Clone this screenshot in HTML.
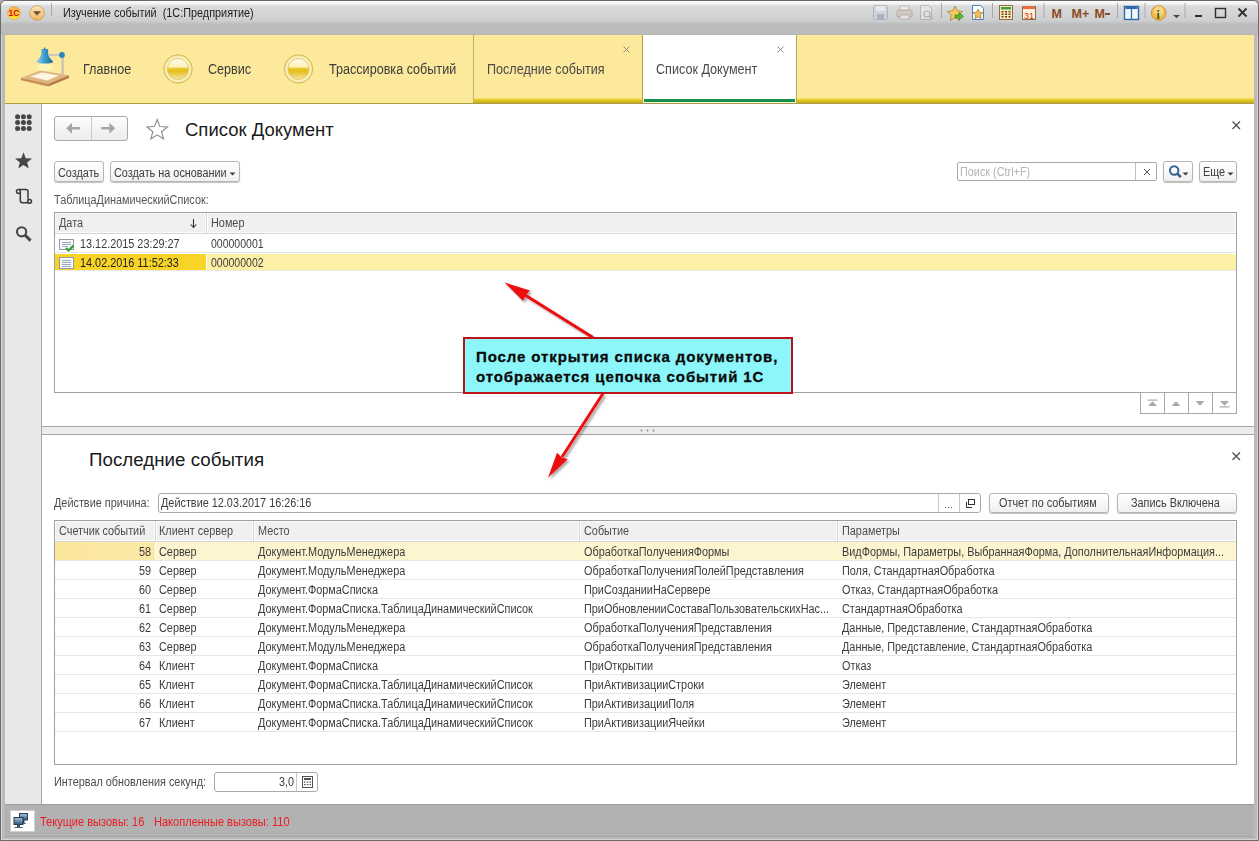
<!DOCTYPE html>
<html><head><meta charset="utf-8">
<style>
*{box-sizing:border-box;margin:0;padding:0}
html,body{width:1259px;height:841px;overflow:hidden;background:#a8a8a8}
body{position:relative;font-family:"Liberation Sans",sans-serif;font-size:11px;color:#4d4d4d}
.a{position:absolute}
.t{position:absolute;white-space:nowrap;line-height:1}
.s{font-size:12px;transform:scaleX(.905);transform-origin:0 0}
.sr{transform-origin:100% 0}
.tab{font-size:14px;transform:scaleX(.9);transform-origin:0 0}
#frame{left:0;top:0;width:1259px;height:841px;background:#bababa;border:1px solid #6a6a6a;border-radius:6px 6px 0 0;box-shadow:inset 1px 1px 0 #d8d8d8,inset -1px -1px 0 #d4d4d4}
#title{left:1px;top:1px;width:1257px;height:34px;border-radius:5px 5px 0 0;background:linear-gradient(#fbfbfb 0px,#f2f2f2 3px,#dadbdd 5px,#cdced0 20px,#bcbdbf 23px,#bbbcbe 32px,#b8b4a6 34px)}
#secbar{left:5px;top:35px;width:1249px;height:68px;background:#fce99c}
#sidebar{left:5px;top:104px;width:37px;height:700px;background:#e8e8e8;border-right:1px solid #a8a8a8}
#main{left:42px;top:104px;width:1212px;height:700px;background:#fff}
#status{left:5px;top:804px;width:1249px;height:33px;background:#b2b2b2;border-top:1px solid #9c9c9c;border-bottom:1px solid #a4a4a4}
.sep{position:absolute;width:1px;background:#a8a8a8;box-shadow:1px 0 0 #e6e6e6}
.btn{position:absolute;border:1px solid #b5b5b5;border-radius:3px;background:linear-gradient(#fff,#f0f0f0);box-shadow:0 1px 1px rgba(0,0,0,.25);color:#404040}
.inp{position:absolute;border:1px solid #a9a9a9;border-radius:3px;background:#fff}
.tbl{position:absolute;border:1px solid #a0a0a0;background:#fff}
.hdr{position:absolute;background:#f0f0f0;border-bottom:1px solid #d6d6d6}
.row{position:absolute;left:0;height:19px;border-bottom:1px solid #e4e4e4}
.cell{position:absolute;white-space:nowrap;line-height:1;top:5px;color:#333}
.hc{position:absolute;width:1px;background:#d8d8d8}
</style></head><body>
<div id="frame" class="a"></div>
<div id="title" class="a"></div>
<div class="t s" style="left:63px;top:7px;color:#1e1e1e">Изучение событий&nbsp;&nbsp;(1С:Предприятие)</div>
<div id="secbar" class="a"></div>
<div id="sidebar" class="a"></div>
<div id="main" class="a"></div>
<div id="status" class="a"></div>

<!-- section bar -->
<div class="a" style="left:5px;top:102px;width:1249px;height:1px;background:#fbf080"></div><div class="a" style="left:5px;top:103px;width:1249px;height:1px;background:#aa9c50"></div>
<div class="a" style="left:473px;top:35px;width:1px;height:68px;background:#c0b060"></div>
<div class="a" style="left:474px;top:98px;width:780px;height:5px;background:linear-gradient(#fcee70 0px,#ecd840 1px,#dcc020 3px,#c8aa14 5px)"></div>
<div class="a" style="left:642px;top:35px;width:1px;height:68px;background:#b0a050"></div>
<div class="a" style="left:643px;top:35px;width:154px;height:68px;background:linear-gradient(#fff 0,#fff 62px,#f8fcd0 68px);border-right:1px solid #b8a858"></div>
<div class="a" style="left:644px;top:99px;width:151px;height:3px;background:#13904a"></div>
<div class="t tab" style="left:83px;top:62px;color:#3c3c3c">Главное</div>
<div class="t tab" style="left:208px;top:62px;color:#3c3c3c">Сервис</div>
<div class="t tab" style="left:329px;top:62px;color:#3c3c3c">Трассировка событий</div>
<div class="t tab" style="left:487px;top:62px;color:#4a4a4a">Последние события</div>
<div class="t tab" style="left:656px;top:62px;color:#4a4a4a">Список Документ</div>

<!-- upper form -->
<div class="t" style="left:185px;top:121px;font-size:18.5px;color:#1a1a1a">Список Документ</div>
<div class="btn" style="left:54px;top:116px;width:74px;height:25px;border-color:#a9a9a9;box-shadow:none;background:linear-gradient(#fdfdfd,#ececec)"></div>
<div class="a" style="left:91px;top:117px;width:1px;height:23px;background:#c8c8c8"></div>
<div class="btn" style="left:54px;top:161px;width:50px;height:21px"></div>
<div class="t s" style="left:58px;top:167px;color:#404040">Создать</div>
<div class="btn" style="left:110px;top:161px;width:130px;height:21px"></div>
<div class="t s" style="left:114px;top:167px;color:#404040">Создать на основании</div>
<div class="inp" style="left:957px;top:162px;width:200px;height:19px;border-radius:2px"></div>
<div class="a" style="left:1135px;top:163px;width:1px;height:17px;background:#c0c0c0"></div>
<div class="t s" style="left:960px;top:166px;color:#b4b4b4">Поиск (Ctrl+F)</div>
<div class="btn" style="left:1163px;top:161px;width:30px;height:21px"></div>
<div class="btn" style="left:1199px;top:161px;width:38px;height:21px"></div>
<div class="t s" style="left:1203px;top:166px;color:#404040">Еще</div>
<div class="t s" style="left:54px;top:194px;color:#555">ТаблицаДинамическийСписок:</div>

<div class="tbl" style="left:54px;top:212px;width:1183px;height:181px"></div>
<div class="hdr" style="left:55px;top:213px;width:1181px;height:21px"></div>
<div class="a" style="left:55px;top:213px;width:151px;height:20px;border:1px solid #fbfbfb"></div>
<div class="a" style="left:207px;top:213px;width:1029px;height:20px;border:1px solid #fbfbfb"></div>

<div class="a" style="left:206px;top:213px;width:1px;height:20px;background:#d4d4d4;box-shadow:1px 0 0 #fff"></div>
<div class="t s" style="left:59px;top:217px;color:#4d4d4d">Дата</div>
<div class="t s" style="left:211px;top:217px;color:#4d4d4d">Номер</div>
<div class="a" style="left:55px;top:252px;width:1181px;height:1px;background:#e6e6e6"></div>
<div class="a" style="left:55px;top:254px;width:151px;height:16px;background:#f8d426"></div>
<div class="a" style="left:207px;top:254px;width:1029px;height:16px;background:#fcefa6"></div>
<div class="a" style="left:55px;top:270px;width:1181px;height:1px;background:#e9e9e9"></div>
<div class="t s" style="left:80px;top:238px;color:#3c3c3c">13.12.2015 23:29:27</div>
<div class="t s" style="left:80px;top:257px;color:#222">14.02.2016 11:52:33</div>
<div class="t s" style="left:211px;top:238px;color:#3c3c3c;transform:scaleX(.875)">000000001</div>
<div class="t s" style="left:211px;top:257px;color:#3c3c3c;transform:scaleX(.875)">000000002</div>
<div class="a" style="left:1140px;top:392px;width:97px;height:22px;border:1px solid #a8a8a8;background:#fff"></div>
<div class="a" style="left:1164px;top:393px;width:1px;height:20px;background:#a8a8a8"></div>
<div class="a" style="left:1188px;top:393px;width:1px;height:20px;background:#a8a8a8"></div>
<div class="a" style="left:1212px;top:393px;width:1px;height:20px;background:#a8a8a8"></div>

<!-- splitter -->
<div class="a" style="left:42px;top:426px;width:1212px;height:9px;background:#ececec;border-top:1px solid #a6a6a6;border-bottom:1px solid #a6a6a6"></div>

<!-- lower form -->
<div class="t" style="left:89px;top:451px;font-size:18.75px;color:#1a1a1a">Последние события</div>
<div class="t s" style="left:54px;top:497px;color:#4d4d4d">Действие причина:</div>
<div class="inp" style="left:158px;top:493px;width:823px;height:20px"></div>
<div class="a" style="left:938px;top:494px;width:1px;height:18px;background:#c8c8c8"></div>
<div class="a" style="left:959px;top:494px;width:1px;height:18px;background:#c8c8c8"></div>
<div class="t s" style="left:161px;top:497px;color:#3c3c3c">Действие 12.03.2017 16:26:16</div>
<div class="btn" style="left:989px;top:493px;width:120px;height:20px"></div>
<div class="t s" style="left:999px;top:497px;color:#404040">Отчет по событиям</div>
<div class="btn" style="left:1117px;top:493px;width:120px;height:20px"></div>
<div class="t s" style="left:1131px;top:497px;color:#404040">Запись Включена</div>

<div class="tbl" style="left:54px;top:520px;width:1183px;height:245px"></div>
<div class="hdr" style="left:55px;top:521px;width:1181px;height:21px"></div>
<div class="a" style="left:55px;top:521px;width:100px;height:20px;border:1px solid #fbfbfb"></div>
<div class="a" style="left:156px;top:521px;width:97px;height:20px;border:1px solid #fbfbfb"></div>
<div class="a" style="left:254px;top:521px;width:325px;height:20px;border:1px solid #fbfbfb"></div>
<div class="a" style="left:580px;top:521px;width:257px;height:20px;border:1px solid #fbfbfb"></div>
<div class="a" style="left:838px;top:521px;width:398px;height:20px;border:1px solid #fbfbfb"></div>

<div class="a" style="left:155px;top:521px;width:1px;height:20px;background:#d4d4d4;box-shadow:1px 0 0 #fff"></div>
<div class="a" style="left:253px;top:521px;width:1px;height:20px;background:#d4d4d4;box-shadow:1px 0 0 #fff"></div>
<div class="a" style="left:579px;top:521px;width:1px;height:20px;background:#d4d4d4;box-shadow:1px 0 0 #fff"></div>
<div class="a" style="left:837px;top:521px;width:1px;height:20px;background:#d4d4d4;box-shadow:1px 0 0 #fff"></div>
<div class="t s" style="left:59px;top:525px;color:#4d4d4d">Счетчик событий</div>
<div class="t s" style="left:159px;top:525px;color:#4d4d4d">Клиент сервер</div>
<div class="t s" style="left:258px;top:525px;color:#4d4d4d">Место</div>
<div class="t s" style="left:584px;top:525px;color:#4d4d4d">Событие</div>
<div class="t s" style="left:842px;top:525px;color:#4d4d4d">Параметры</div>
<div class="a" style="left:55px;top:542px;width:100px;height:18px;background:linear-gradient(90deg,#fbe69c,#fbe9a8)"></div>
<div class="a" style="left:156px;top:542px;width:1080px;height:18px;background:#fdf5d0"></div>
<div class="a" style="left:55px;top:560px;width:1181px;height:1px;background:#e6e6e6"></div>
<div class="t s sr" style="left:54px;width:97px;text-align:right;top:546px;color:#3c3c3c">58</div>
<div class="t s" style="left:159px;top:546px;color:#3c3c3c">Сервер</div>
<div class="t s" style="left:258px;top:546px;color:#3c3c3c">Документ.МодульМенеджера</div>
<div class="t s" style="left:584px;top:546px;color:#3c3c3c">ОбработкаПолученияФормы</div>
<div class="t s" style="left:842px;top:546px;color:#3c3c3c">ВидФормы, Параметры, ВыбраннаяФорма, ДополнительнаяИнформация...</div>
<div class="a" style="left:55px;top:579px;width:1181px;height:1px;background:#e6e6e6"></div>
<div class="t s sr" style="left:54px;width:97px;text-align:right;top:565px;color:#3c3c3c">59</div>
<div class="t s" style="left:159px;top:565px;color:#3c3c3c">Сервер</div>
<div class="t s" style="left:258px;top:565px;color:#3c3c3c">Документ.МодульМенеджера</div>
<div class="t s" style="left:584px;top:565px;color:#3c3c3c">ОбработкаПолученияПолейПредставления</div>
<div class="t s" style="left:842px;top:565px;color:#3c3c3c">Поля, СтандартнаяОбработка</div>
<div class="a" style="left:55px;top:598px;width:1181px;height:1px;background:#e6e6e6"></div>
<div class="t s sr" style="left:54px;width:97px;text-align:right;top:584px;color:#3c3c3c">60</div>
<div class="t s" style="left:159px;top:584px;color:#3c3c3c">Сервер</div>
<div class="t s" style="left:258px;top:584px;color:#3c3c3c">Документ.ФормаСписка</div>
<div class="t s" style="left:584px;top:584px;color:#3c3c3c">ПриСозданииНаСервере</div>
<div class="t s" style="left:842px;top:584px;color:#3c3c3c">Отказ, СтандартнаяОбработка</div>
<div class="a" style="left:55px;top:617px;width:1181px;height:1px;background:#e6e6e6"></div>
<div class="t s sr" style="left:54px;width:97px;text-align:right;top:603px;color:#3c3c3c">61</div>
<div class="t s" style="left:159px;top:603px;color:#3c3c3c">Сервер</div>
<div class="t s" style="left:258px;top:603px;color:#3c3c3c">Документ.ФормаСписка.ТаблицаДинамическийСписок</div>
<div class="t s" style="left:584px;top:603px;color:#3c3c3c">ПриОбновленииСоставаПользовательскихНас...</div>
<div class="t s" style="left:842px;top:603px;color:#3c3c3c">СтандартнаяОбработка</div>
<div class="a" style="left:55px;top:636px;width:1181px;height:1px;background:#e6e6e6"></div>
<div class="t s sr" style="left:54px;width:97px;text-align:right;top:622px;color:#3c3c3c">62</div>
<div class="t s" style="left:159px;top:622px;color:#3c3c3c">Сервер</div>
<div class="t s" style="left:258px;top:622px;color:#3c3c3c">Документ.МодульМенеджера</div>
<div class="t s" style="left:584px;top:622px;color:#3c3c3c">ОбработкаПолученияПредставления</div>
<div class="t s" style="left:842px;top:622px;color:#3c3c3c">Данные, Представление, СтандартнаяОбработка</div>
<div class="a" style="left:55px;top:655px;width:1181px;height:1px;background:#e6e6e6"></div>
<div class="t s sr" style="left:54px;width:97px;text-align:right;top:641px;color:#3c3c3c">63</div>
<div class="t s" style="left:159px;top:641px;color:#3c3c3c">Сервер</div>
<div class="t s" style="left:258px;top:641px;color:#3c3c3c">Документ.МодульМенеджера</div>
<div class="t s" style="left:584px;top:641px;color:#3c3c3c">ОбработкаПолученияПредставления</div>
<div class="t s" style="left:842px;top:641px;color:#3c3c3c">Данные, Представление, СтандартнаяОбработка</div>
<div class="a" style="left:55px;top:674px;width:1181px;height:1px;background:#e6e6e6"></div>
<div class="t s sr" style="left:54px;width:97px;text-align:right;top:660px;color:#3c3c3c">64</div>
<div class="t s" style="left:159px;top:660px;color:#3c3c3c">Клиент</div>
<div class="t s" style="left:258px;top:660px;color:#3c3c3c">Документ.ФормаСписка</div>
<div class="t s" style="left:584px;top:660px;color:#3c3c3c">ПриОткрытии</div>
<div class="t s" style="left:842px;top:660px;color:#3c3c3c">Отказ</div>
<div class="a" style="left:55px;top:693px;width:1181px;height:1px;background:#e6e6e6"></div>
<div class="t s sr" style="left:54px;width:97px;text-align:right;top:679px;color:#3c3c3c">65</div>
<div class="t s" style="left:159px;top:679px;color:#3c3c3c">Клиент</div>
<div class="t s" style="left:258px;top:679px;color:#3c3c3c">Документ.ФормаСписка.ТаблицаДинамическийСписок</div>
<div class="t s" style="left:584px;top:679px;color:#3c3c3c">ПриАктивизацииСтроки</div>
<div class="t s" style="left:842px;top:679px;color:#3c3c3c">Элемент</div>
<div class="a" style="left:55px;top:712px;width:1181px;height:1px;background:#e6e6e6"></div>
<div class="t s sr" style="left:54px;width:97px;text-align:right;top:698px;color:#3c3c3c">66</div>
<div class="t s" style="left:159px;top:698px;color:#3c3c3c">Клиент</div>
<div class="t s" style="left:258px;top:698px;color:#3c3c3c">Документ.ФормаСписка.ТаблицаДинамическийСписок</div>
<div class="t s" style="left:584px;top:698px;color:#3c3c3c">ПриАктивизацииПоля</div>
<div class="t s" style="left:842px;top:698px;color:#3c3c3c">Элемент</div>
<div class="a" style="left:55px;top:731px;width:1181px;height:1px;background:#e6e6e6"></div>
<div class="t s sr" style="left:54px;width:97px;text-align:right;top:717px;color:#3c3c3c">67</div>
<div class="t s" style="left:159px;top:717px;color:#3c3c3c">Клиент</div>
<div class="t s" style="left:258px;top:717px;color:#3c3c3c">Документ.ФормаСписка.ТаблицаДинамическийСписок</div>
<div class="t s" style="left:584px;top:717px;color:#3c3c3c">ПриАктивизацииЯчейки</div>
<div class="t s" style="left:842px;top:717px;color:#3c3c3c">Элемент</div>


<div class="t s" style="left:54px;top:776px;color:#4d4d4d">Интервал обновления секунд:</div>
<div class="inp" style="left:214px;top:772px;width:104px;height:20px"></div>
<div class="a" style="left:296px;top:773px;width:1px;height:18px;background:#c8c8c8"></div>
<div class="t s sr" style="left:244px;width:50px;text-align:right;top:776px;color:#3c3c3c">3,0</div>

<!-- status -->
<div class="a" style="left:10px;top:810px;width:25px;height:22px;background:#fff;border:1px solid #d0d0d0"></div>
<div class="t" style="left:40px;top:816px;color:#ec1c24;font-size:12px;transform:scaleX(.92);transform-origin:0 0">Текущие вызовы: 16</div><div class="t" style="left:154px;top:816px;color:#ec1c24;font-size:12px;transform:scaleX(.92);transform-origin:0 0">Накопленные вызовы: 110</div>


<svg class="a" style="left:0;top:0" width="1259" height="841" viewBox="0 0 1259 841">
<defs>
 <linearGradient id="g1c" x1="0" y1="0" x2="0" y2="1"><stop offset="0" stop-color="#f8b048"/><stop offset="0.55" stop-color="#fbc840"/><stop offset="1" stop-color="#ffec20"/></linearGradient>
 <linearGradient id="gdd" x1="0" y1="0" x2="0" y2="1"><stop offset="0" stop-color="#fde8c0"/><stop offset="1" stop-color="#f0b45a"/></linearGradient>
 <linearGradient id="ggold" x1="0" y1="0" x2="0" y2="1"><stop offset="0" stop-color="#fffdf0"/><stop offset="0.4" stop-color="#fcf2b8"/><stop offset="0.48" stop-color="#ecc830"/><stop offset="0.6" stop-color="#e4be18"/><stop offset="1" stop-color="#f6e4a8"/></linearGradient>
 <radialGradient id="gring" cx="0.5" cy="0.5" r="0.5"><stop offset="0.7" stop-color="#fdf6d0"/><stop offset="0.85" stop-color="#fbf0c0"/><stop offset="1" stop-color="#ecd470"/></radialGradient>
 <linearGradient id="gshade" x1="0" y1="0" x2="1" y2="0"><stop offset="0" stop-color="#9fd4ec"/><stop offset="0.5" stop-color="#3a9ccc"/><stop offset="1" stop-color="#1a6c9c"/></linearGradient>
 <filter id="sh" x="-20%" y="-20%" width="140%" height="140%"><feDropShadow dx="2" dy="2" stdDeviation="1.2" flood-color="#000" flood-opacity="0.35"/></filter>
</defs>
<!-- title bar left -->
<circle cx="14" cy="13" r="6.5" fill="url(#g1c)" stroke="#d8a050" stroke-width="0.6"/>
<text x="8.6" y="16.2" font-family="Liberation Sans" font-weight="bold" font-size="8.5" fill="#d81010">1С</text>
<circle cx="37" cy="13" r="7.3" fill="url(#gdd)" stroke="#c89858" stroke-width="0.8"/>
<path d="M33 11.2 L41 11.2 L37 15.5 Z" fill="#6a5030"/>
<line x1="51.5" y1="3" x2="51.5" y2="16" stroke="#a8a8a8" stroke-width="1"/>
<!-- title bar right icons -->
<g opacity="0.45">
 <rect x="873.5" y="5.5" width="14" height="14" rx="1" fill="#c8d4e0" stroke="#7890a8"/>
 <rect x="876" y="6" width="9" height="5" fill="#fff"/><rect x="877" y="14" width="7" height="5" fill="#7890a8"/>
 <rect x="897" y="10" width="15" height="7" rx="1.5" fill="#d0b8a8" stroke="#907060"/>
 <rect x="900" y="6" width="9" height="4" fill="#fff" stroke="#907060" stroke-width="0.8"/>
 <rect x="900" y="15" width="9" height="4" fill="#fff" stroke="#907060" stroke-width="0.8"/>
 <path d="M920.5 5.5 h8 l3 3 v11 h-11 z" fill="#f4f4f4" stroke="#909090"/>
 <circle cx="927" cy="14" r="3" fill="none" stroke="#808080" stroke-width="1.2"/><line x1="929" y1="16" x2="932" y2="19" stroke="#a08060" stroke-width="1.6"/>
</g>
<line x1="941.5" y1="3" x2="941.5" y2="18" stroke="#a8a8a8"/>
<path d="M955 6 l2.4 4.8 5.2 .7 -3.8 3.7 .9 5.2 -4.7 -2.5 -4.7 2.5 .9 -5.2 -3.8 -3.7 5.2 -.7z" fill="#f6c860" stroke="#a07830" stroke-width="0.7"/>
<path d="M955 15 h4 v-2.5 l4.5 3.8 -4.5 3.8 v-2.5 h-4z" fill="#50c030" stroke="#287818" stroke-width="0.6"/>
<path d="M972.5 5.5 h8 l3 3 v11 h-11 z" fill="#fff" stroke="#5080b0"/>
<path d="M978 9 l1.6 3.2 3.4 .5 -2.5 2.4 .6 3.4 -3.1 -1.6 -3.1 1.6 .6 -3.4 -2.5 -2.4 3.4 -.5z" fill="#f0c050" stroke="#906020" stroke-width="0.6"/>
<line x1="992.5" y1="3" x2="992.5" y2="18" stroke="#a8a8a8"/>
<rect x="999.5" y="5.5" width="13" height="14" fill="#fbe8b8" stroke="#8a7048"/>
<rect x="1001" y="7" width="10" height="2.5" fill="#40a040"/>
<g fill="#604020"><rect x="1001.5" y="11" width="2" height="1.5"/><rect x="1005" y="11" width="2" height="1.5"/><rect x="1008.5" y="11" width="2" height="1.5"/><rect x="1001.5" y="13.5" width="2" height="1.5"/><rect x="1005" y="13.5" width="2" height="1.5"/><rect x="1008.5" y="13.5" width="2" height="1.5"/><rect x="1001.5" y="16" width="2" height="1.5"/><rect x="1005" y="16" width="2" height="1.5"/><rect x="1008.5" y="16" width="2" height="1.5"/></g>
<rect x="1022.5" y="6.5" width="13" height="13" fill="#fdf0d8" stroke="#8a7048"/>
<rect x="1023" y="6" width="12" height="3" fill="#e87040"/>
<text x="1024" y="18.5" font-family="Liberation Sans" font-size="9" fill="#d03010">31</text>
<line x1="1044" y1="3" x2="1044" y2="18" stroke="#a8a8a8"/>
<text x="1051.5" y="18.3" font-family="Liberation Sans" font-weight="bold" font-size="12.5" fill="#8a4a24">M</text>
<text x="1071.5" y="18.3" font-family="Liberation Sans" font-weight="bold" font-size="12.5" fill="#8a4a24">M+</text>
<text x="1094.5" y="18.3" font-family="Liberation Sans" font-weight="bold" font-size="12.5" fill="#8a4a24">M</text><rect x="1105" y="13" width="5" height="2" fill="#8a4a24"/>
<line x1="1117.5" y1="3" x2="1117.5" y2="18" stroke="#a8a8a8"/>
<rect x="1124.5" y="6.5" width="14" height="13" fill="#f0f6fc" stroke="#3068a8" stroke-width="1.4"/>
<line x1="1131.5" y1="7" x2="1131.5" y2="19" stroke="#3068a8" stroke-width="1.2"/>
<rect x="1125.5" y="7" width="12" height="2" fill="#3068a8"/>
<line x1="1145" y1="3" x2="1145" y2="18" stroke="#a8a8a8"/>
<circle cx="1158.7" cy="13" r="7.4" fill="#f4b848" stroke="#c08838" stroke-width="0.8"/>
<circle cx="1158.7" cy="11" r="5" fill="#fde6a8" opacity="0.6"/>
<text x="1156.3" y="18.5" font-family="Liberation Serif" font-weight="bold" font-size="13" fill="#3c6a18">i</text>
<path d="M1173 15 h7 l-3.5 3z" fill="#404040"/>
<line x1="1185" y1="3" x2="1185" y2="18" stroke="#a8a8a8"/>
<rect x="1195" y="15" width="7" height="2" fill="#303030"/>
<rect x="1215.5" y="8.5" width="10" height="9" fill="none" stroke="#303030" stroke-width="1.4"/>
<path d="M1238.5 8.5 L1246.5 16.5 M1246.5 8.5 L1238.5 16.5" stroke="#303030" stroke-width="1.8"/>

<!-- lamp -->
<path d="M21 77.7 L40.6 70.6 L69 75.3 L48.3 83.7 Z" fill="#dfb680"/>
<path d="M21 77.7 L48.3 83.7 L48.3 86.6 L21 80.3 Z" fill="#c88e58"/>
<path d="M48.3 83.7 L69 75.3 L69 78 L48.3 86.6 Z" fill="#b67a48"/>
<path d="M30 76.5 L42 72.5 L59 75.5 L47 80.5 Z" fill="#fbf5e2"/>
<ellipse cx="45" cy="67" rx="8" ry="4" fill="#fff8c0" opacity="0.7"/>
<rect x="61.6" y="55" width="2" height="19" fill="#c4bcb4"/>
<rect x="47" y="54" width="15" height="2" fill="#ccc4bc"/>
<circle cx="62" cy="55" r="2.9" fill="#2a88b8"/>
<path d="M41.3 49 h6.8 v6 q1.5 3.5 5 6.5 q0 2 -8.4 2 q-8.4 0 -8.4 -2 q3.5 -3 5 -6.5z" fill="url(#gshade)"/>
<rect x="44" y="47.5" width="1.2" height="2" fill="#2a6a98"/>
<!-- gold circles -->
<g>
 <circle cx="178" cy="69" r="14.2" fill="url(#gring)" stroke="#d6be58" stroke-width="1"/>
 <circle cx="178" cy="69" r="10.6" fill="url(#ggold)" stroke="#dcc468" stroke-width="0.9"/>
 <circle cx="298.5" cy="69" r="14.2" fill="url(#gring)" stroke="#d6be58" stroke-width="1"/>
 <circle cx="298.5" cy="69" r="10.6" fill="url(#ggold)" stroke="#dcc468" stroke-width="0.9"/>
</g>
<!-- tab close -->
<path d="M623.5 46.5 L629.5 52.5 M629.5 46.5 L623.5 52.5" stroke="#8a8a8a" stroke-width="1"/>
<path d="M777.5 46.5 L783.5 52.5 M783.5 46.5 L777.5 52.5" stroke="#8a8a8a" stroke-width="1"/>

<!-- sidebar icons -->
<g fill="#474747">
 <circle cx="17.6" cy="116.8" r="2.5"/><circle cx="23.4" cy="116.8" r="2.5"/><circle cx="29.2" cy="116.8" r="2.5"/>
 <circle cx="17.6" cy="122.6" r="2.5"/><circle cx="23.4" cy="122.6" r="2.5"/><circle cx="29.2" cy="122.6" r="2.5"/>
 <circle cx="17.6" cy="128.4" r="2.5"/><circle cx="23.4" cy="128.4" r="2.5"/><circle cx="29.2" cy="128.4" r="2.5"/>
 <path d="M23.50 152.30 L25.73 158.23 L32.06 158.52 L27.11 162.47 L28.79 168.58 L23.50 165.10 L18.21 168.58 L19.89 162.47 L14.94 158.52 L21.27 158.23Z"/>
</g>
<g fill="none" stroke="#3c3c3c" stroke-width="1.5">
 <path d="M18.4 189.6 H26 Q28 189.6 28 191.6 V199.8"/>
 <path d="M20.3 191.8 V200.6 Q20.3 202.7 22.4 202.7 H29.4"/>
 <circle cx="18.4" cy="191.5" r="1.9" fill="#e8e8e8"/>
 <circle cx="29.6" cy="201.3" r="1.9" fill="#e8e8e8"/>
</g>
<circle cx="21.6" cy="231.8" r="4.6" fill="none" stroke="#474747" stroke-width="2.1"/>
<line x1="25" y1="235.2" x2="30.6" y2="240.6" stroke="#474747" stroke-width="3"/>

<!-- upper form -->
<path d="M66.2 128.3 L72 122.8 V127 H80 V129.6 H72 V133.8 Z" fill="#a6a6a6"/>
<path d="M115.2 128.3 L109.4 122.8 V127 H101.2 V129.6 H109.4 V133.8 Z" fill="#a6a6a6"/>

<path d="M157.20 119.50 L159.90 126.58 L167.47 126.96 L161.57 131.72 L163.55 139.04 L157.20 134.90 L150.85 139.04 L152.83 131.72 L146.93 126.96 L154.50 126.58Z" fill="none" stroke="#8c8c8c" stroke-width="1.1" stroke-linejoin="miter"/>
<path d="M1232.5 121.5 L1240 129 M1240 121.5 L1232.5 129" stroke="#505050" stroke-width="1.3"/>
<path d="M229.5 172.5 h6 l-3 3z" fill="#404040"/>
<path d="M1144 169 L1150 175 M1150 169 L1144 175" stroke="#505050" stroke-width="1"/>
<circle cx="1174.2" cy="170.5" r="4.2" fill="none" stroke="#35608f" stroke-width="2"/>
<line x1="1177.3" y1="173.6" x2="1180.8" y2="177.2" stroke="#35608f" stroke-width="2.6"/>
<path d="M1182.5 172.5 h6 l-3 3z" fill="#404040"/>
<path d="M1227.5 172.5 h6 l-3 3z" fill="#404040"/>
<!-- sort arrow -->
<path d="M193.5 219 v8 M190.8 224.5 l2.7 3 2.7 -3" stroke="#303030" stroke-width="1.1" fill="none"/>
<!-- doc icons -->
<rect x="59.5" y="239.5" width="14" height="10" fill="#fafafa" stroke="#909aa8"/>
<g stroke="#98a8c0" stroke-width="1"><line x1="62" y1="242.5" x2="71" y2="242.5"/><line x1="62" y1="244.5" x2="71" y2="244.5"/><line x1="62" y1="246.5" x2="68" y2="246.5"/></g>
<path d="M66 248 l2.5 2.5 5 -5" stroke="#30a030" stroke-width="2.2" fill="none"/>
<rect x="59.5" y="257.5" width="14" height="11" fill="#fafafa" stroke="#909aa8"/>
<g stroke="#98a8c0" stroke-width="1"><line x1="62" y1="260.5" x2="71" y2="260.5"/><line x1="62" y1="262.5" x2="71" y2="262.5"/><line x1="62" y1="264.5" x2="71" y2="264.5"/><line x1="62" y1="266.5" x2="71" y2="266.5"/></g>
<!-- table nav -->
<g fill="#aaaaaa">
 <rect x="1147.5" y="399.5" width="10" height="1.2"/><path d="M1148 406 h9 l-4.5 -4.8z"/>
 <path d="M1171.5 406 h9 l-4.5 -4.8z"/>
 <path d="M1195.5 401 h9 l-4.5 4.8z"/>
 <path d="M1220 401 h9 l-4.5 4.8z"/><rect x="1219.5" y="406.3" width="10" height="1.2"/>
</g>
<!-- splitter dots -->
<g fill="#909090"><circle cx="641.5" cy="430.5" r="1"/><circle cx="647.5" cy="430.5" r="1"/><circle cx="653.5" cy="430.5" r="1"/></g>
<!-- lower form -->
<path d="M1232.5 452.5 L1240 460 M1240 452.5 L1232.5 460" stroke="#505050" stroke-width="1.3"/>
<g fill="#606060"><rect x="945" y="507" width="1" height="1"/><rect x="948" y="507" width="1" height="1"/><rect x="951" y="507" width="1" height="1"/></g>
<rect x="968.5" y="499.5" width="6" height="5" fill="none" stroke="#303030"/>
<path d="M966.5 502 V507.5 H972" fill="none" stroke="#303030"/>
<rect x="302.5" y="776.5" width="10" height="11" fill="#fff" stroke="#505050"/>
<rect x="304" y="778" width="7" height="2" fill="#505050"/>
<g fill="#505050"><rect x="304" y="781.5" width="1.5" height="1.2"/><rect x="306.8" y="781.5" width="1.5" height="1.2"/><rect x="309.5" y="781.5" width="1.5" height="1.2"/><rect x="304" y="784" width="1.5" height="1.2"/><rect x="306.8" y="784" width="1.5" height="1.2"/><rect x="309.5" y="784" width="1.5" height="1.2"/></g>
<!-- status icon -->
<defs><linearGradient id="gmon" x1="0" y1="0" x2="0" y2="1"><stop offset="0" stop-color="#a8c8e0"/><stop offset="1" stop-color="#2a5880"/></linearGradient></defs>
<rect x="19.5" y="813.5" width="8" height="6.5" fill="url(#gmon)" stroke="#1c2c3c" stroke-width="0.9"/>
<rect x="22" y="820" width="2.5" height="3" fill="#405060"/><rect x="21" y="823" width="5" height="0.9" fill="#506070"/>
<rect x="14" y="817.5" width="9" height="7" fill="url(#gmon)" stroke="#1c2c3c" stroke-width="0.9"/>
<rect x="17" y="824.5" width="3" height="2.5" fill="#405060"/><rect x="14.5" y="827" width="8" height="1" fill="#506070"/>
<!-- annotation arrows -->
<g filter="url(#sh)">
 <line x1="593" y1="337.5" x2="525" y2="295" stroke="#ee1111" stroke-width="3"/>
 <path d="M504.5 282.4 L530 290.5 L525.5 295.3 L523 301 Z" fill="#ee1111"/>
 <line x1="603" y1="393.5" x2="562" y2="457" stroke="#ee1111" stroke-width="3"/>
 <path d="M548 477.7 L557 452.8 L561.8 457.5 L567.7 459.3 Z" fill="#ee1111"/>
</g>
</svg>

<!-- annotation -->
<div class="a" style="left:463px;top:337px;width:330px;height:57px;background:#8cf7fa;border:2px solid #bc141a"></div>
<div class="t" style="left:476px;top:347px;font-size:15px;font-weight:bold;letter-spacing:0.9px;color:#0a0a0a;line-height:20px;-webkit-text-stroke:0.3px #0a0a0a">После открытия списка документов,<br>отображается цепочка событий 1С</div>
</body></html>
